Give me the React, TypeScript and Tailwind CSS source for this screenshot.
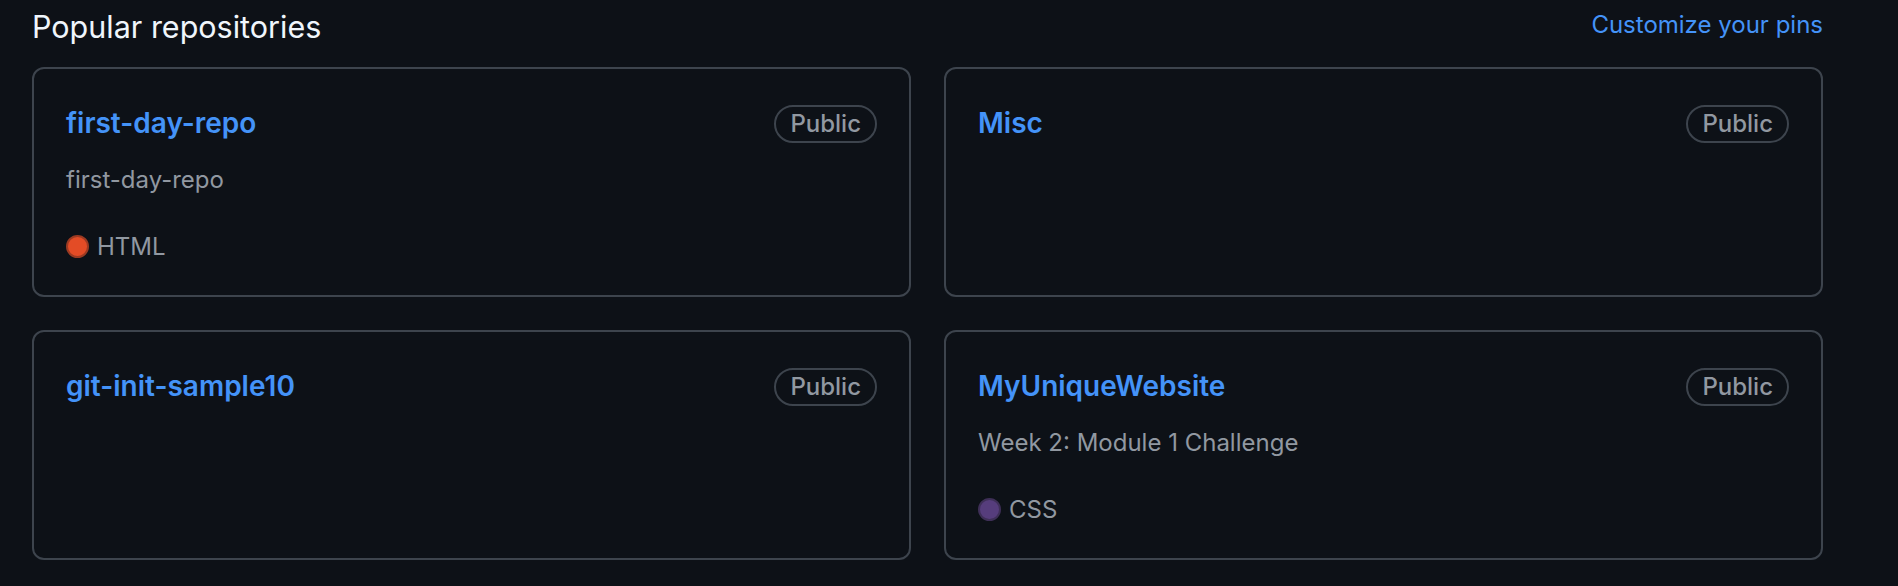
const repos = [
  { name: "first-day-repo", desc: "first-day-repo", lang: "HTML", color: "bg-[#e34c26] border-[#9b3a22]" },
  { name: "Misc" },
  { name: "git-init-sample10" },
  { name: "MyUniqueWebsite", desc: "Week 2: Module 1 Challenge", lang: "CSS", color: "bg-[#563d7c] border-[#3e2f57]" },
] as { name: string; desc?: string; lang?: string; color?: string }[];

function RepoCard({ repo }: { repo: (typeof repos)[number] }) {
  return (
    <div className="flex h-[230px] flex-col rounded-[12px] border-2 border-[#3d444d] px-[32px] pt-[33px] pb-[30px]">
      <div className="flex h-[43px] items-center justify-between">
        <span className="text-[28px] leading-[43px] font-semibold text-[#4493f8]">{repo.name}</span>
        <span className="flex h-[38px] items-center rounded-full border-2 border-[#3d444d] px-[14px] text-[24px] font-medium text-[#9198a1]">
          Public
        </span>
      </div>
      {repo.desc && (
        <p className="mt-[16px] flex-1 text-[24px] leading-[37px] text-[#9198a1]">{repo.desc}</p>
      )}
      {repo.lang && (
        <p className="flex h-[37px] items-center gap-[8px] text-[24px] text-[#9198a1]">
          <span className={`inline-block h-[23px] w-[23px] rounded-full border-2 ${repo.color}`} />
          <span>{repo.lang}</span>
        </p>
      )}
    </div>
  );
}

export default function App() {
  return (
    <div
      className="h-[586px] w-full bg-[#0d1117] pl-[32px] pr-[75px]"
      style={{ fontFamily: "Inter, 'Noto Sans', sans-serif" }}
    >
      <div className="flex items-start justify-between pt-[7px] mb-[20px]">
        <h2 className="text-[30.5px] leading-[40px] font-normal text-[#f0f6fc]">Popular repositories</h2>
        <a className="mt-[3px] text-[24px] leading-[30px] text-[#4493f8]" href="#">
          Customize your pins
        </a>
      </div>
      <div className="grid grid-cols-2 gap-[33px]">
        {repos.map((repo) => (
          <RepoCard key={repo.name} repo={repo} />
        ))}
      </div>
    </div>
  );
}
